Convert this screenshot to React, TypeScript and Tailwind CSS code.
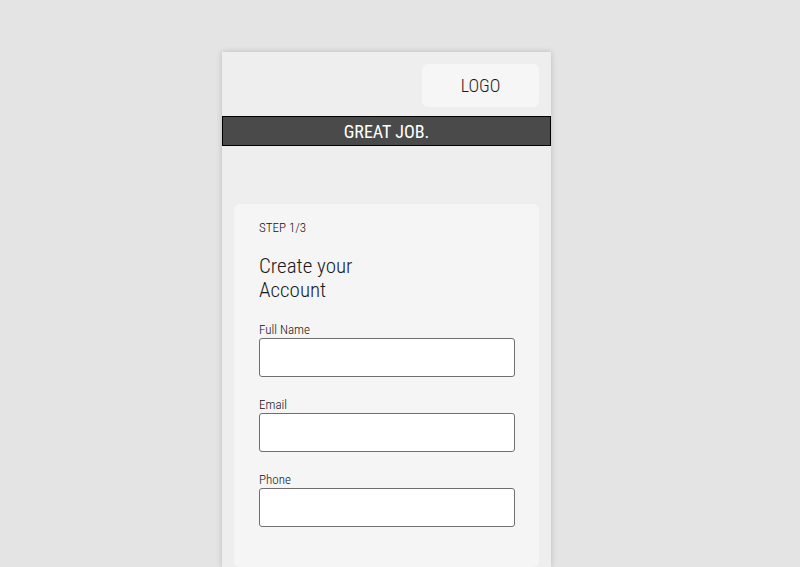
import React from "react";

const fields = ["Full Name", "Email", "Phone"];

export default function App() {
  return (
    <div
      className="min-h-screen w-full overflow-hidden bg-[#e4e4e4] flex pl-[222px] font-light"
      style={{ fontFamily: '"Roboto Condensed", "Liberation Sans Narrow", Roboto, sans-serif' }}
    >
      <div className="mt-[52px] w-[329px] h-[515px] bg-[#eeeeee] shadow-[0_0_6px_rgba(0,0,0,0.18)] flex flex-col">
        {/* Header */}
        <div className="h-[64px] flex justify-end items-start pt-3 pr-3">
          <div className="w-[117px] h-[43px] rounded-md bg-[#f6f6f6] flex items-center justify-center text-[18px] text-[#1a1a1a]">
            LOGO
          </div>
        </div>

        {/* Banner */}
        <div className="h-[30px] bg-[#4a4a4a] border border-black flex items-center justify-center text-white text-[18px] font-normal">
          GREAT JOB.
        </div>

        {/* Form card */}
        <div className="mt-[58px] mx-3 flex-1 rounded-md bg-[#f5f5f5] px-[25px] pt-[16px]">
          <p className="text-[13px] text-[#111] leading-4">STEP 1/3</p>
          <h1 className="mt-[18px] w-[120px] text-[21px] leading-6 text-[#1a1a1a]">
            Create your Account
          </h1>
          <div className="mt-[20px] flex flex-col gap-[20px]">
            {fields.map((f) => (
              <div key={f} className="flex flex-col">
                <label className="text-[13px] leading-4 text-[#111]">{f}</label>
                <input
                  type="text"
                  className="h-[39px] w-[256px] rounded-[3px] border border-[#6f6f6f] bg-white"
                />
              </div>
            ))}
          </div>
        </div>
      </div>
    </div>
  );
}
